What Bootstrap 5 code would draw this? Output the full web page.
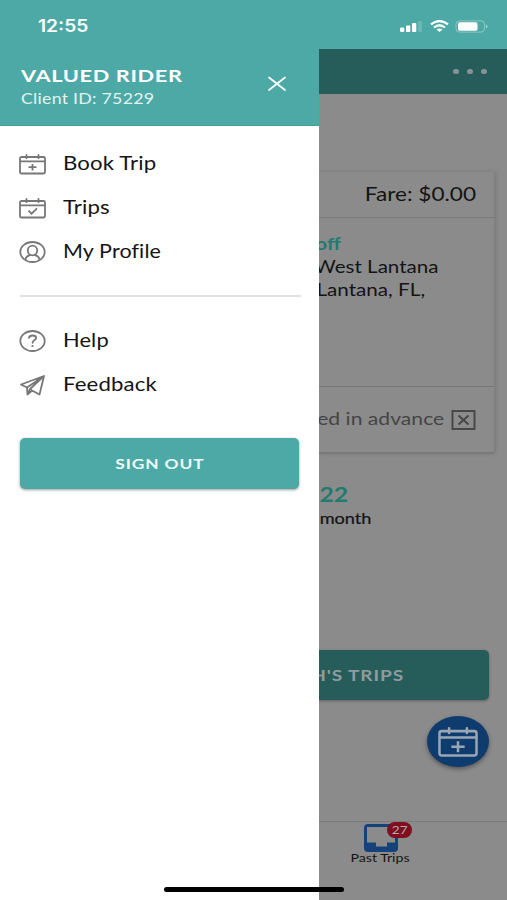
<!DOCTYPE html>
<html lang="en">
<head>
<meta charset="utf-8">
<meta name="viewport" content="width=device-width, initial-scale=1">
<title>Rider menu</title>
<link href="https://cdn.jsdelivr.net/npm/bootstrap@5.3.0/dist/css/bootstrap.min.css" rel="stylesheet">
<style>
:root{--teal:#4ca9a5;--teal-dim:#265d5b;--dim:#8b8b8b;--line-dim:#7b7b7b}
body{font-family:Lato,"Open Sans",sans-serif;color:#141414;background:#fff}
.screen{width:507px;height:900px}
.statusbar{height:49px;background:var(--teal);padding:3px 20px 0 38px}
.clock{font:600 17px/1 Inter,sans-serif;--sx:1.13}
/* wide lettering: glyphs are stretched horizontally from one edge */
.wide{display:inline-block;white-space:nowrap;line-height:1;transform:scaleX(var(--sx,1.19));transform-origin:0 50%}
.wide-end{transform-origin:100% 50%}
.wide-mid{transform-origin:50% 50%}
svg{display:block;flex:none}
.drawer{width:319px}
.drawer-head{height:77px;background:var(--teal);color:#fff;padding:18px 32px 0 21px;border-bottom:1px solid #43a09b}
.close-x{margin-top:8px}
.rider{font-size:17.5px;font-weight:700;letter-spacing:.5px;--sx:1.245}
.client{font-size:14.5px;letter-spacing:.2px;color:#e3f3f2;margin-top:7px;--sx:1.225}
.menu-row{height:44px;padding-left:19px;gap:17px;font-size:18.3px;letter-spacing:.1px}
.menu-row .wide{margin-top:-1px}
.menu-row svg{color:#777;stroke:#777;stroke-width:1.8}
.w-book{--sx:1.215}.w-trips{--sx:1.215}.w-profile{--sx:1.175}.w-help{--sx:1.195}.w-feed{--sx:1.215}
.menu-top{padding-top:16px}
.rule{height:2px;background:#dfe1e1;margin:21px 18px 0 20px}
.menu-bottom{padding-top:22px}
.btn-teal{height:51px;border:0;border-radius:5px;font-size:14px;font-weight:700;letter-spacing:.7px;color:#eefafa;background:var(--teal);box-shadow:0 1px 3px #0006}
.signout{margin:31px 20px 0 20px;--sx:1.24}
.shade{background:var(--dim)}
.appbar{height:45px;background:var(--teal-dim);padding-right:20px;gap:8.5px}
.dot{width:5.6px;height:5.6px;border-radius:50%;background:#8a9196}
.trip{height:282px;margin:78px 12px 0 0;border-right:1px solid #808080;border-bottom:2px solid #7a7a7a;border-bottom-right-radius:4px;box-shadow:1px 0 4px #0002}
.trip-fare{height:46px;padding-right:18px;border-bottom:1px solid var(--line-dim)}
.fs-menu{font-size:18.3px;--sx:1.235}
.trip-body{height:169px;padding-top:14px;border-bottom:1px solid #777}
.trip-body .wide{font-size:17.5px}
.leg{height:23px}
.leg-off{padding-right:153px;color:#237a6f;font-weight:700;--sx:1.16}
.leg-a{padding-right:56px;--sx:1.175}
.leg-b{padding-right:69px;--sx:1.18}
.advance{padding-right:18px;gap:7px;color:#454545;font-size:16.5px;--sx:1.28}
.count{padding:30px 159px 0 0;color:#237a6f;font-size:20px;font-weight:700;--sx:1.24}
.month{padding:8px 136px 0 0;font-size:14.5px;--sx:1.25}
.month .wide{-webkit-text-stroke:.2px}
.alltrips{height:50px;margin:123px 18px 0 0;background:var(--teal-dim);color:#8e9c9f;border-radius:0 5px 5px 0;padding:1px 85px 0 0;--sx:1.27;box-shadow:0 1px 3px #0005}
.alltrips .wide{font-size:15px}
.fab{width:62px;height:51px;border-radius:50%;background:#0f3c6e;margin:16px 18px 0 0;box-shadow:0 2px 4px #0006}
.tabs{margin-top:54px;height:79px;border-top:1px solid #7b7b7b;padding-left:32px}
.tab{width:59px;padding-top:2px}
.tab-label{font-size:11.5px;--sx:1.23}
.count-badge{position:absolute;left:36px;top:0;width:25px;height:16px;border-radius:8px;background:#7d0f1e;color:#b9a9ab;font-size:11.5px;--sx:1.18}
.home{position:absolute;left:164px;bottom:8px;width:180px;height:5px;border-radius:3px;background:#000}
</style>
</head>
<body>
<svg class="d-none">
  <symbol id="cal" viewBox="0 0 27 22">
    <path d="M2.500 4h22q1.500 0 1.500 1.400v13.600q0 1.500-1.500 1.500h-22Q1 20.500 1 19V5.400Q1 4 2.500 4zM1 8.300h25M7.500 2v3.200M19.500 2v3.200" fill="none" stroke-linecap="round"/>
  </symbol>
</svg>
<div class="screen position-relative overflow-hidden d-flex flex-column">
  <header class="statusbar d-flex justify-content-between align-items-center">
    <span class="wide clock text-white">12:55</span>
    <div class="d-flex align-items-center gap-2">
      <svg width="22" height="12" fill="#fff"><rect x="0" y="7.500" width="4.300" height="4.500" rx="1.200"/><rect x="6" y="5.500" width="4.300" height="6.500" rx="1"/><rect x="12" y="3" width="4.300" height="9" rx="1"/><rect x="18" y="1" width="4" height="11" rx="1" opacity=".18"/></svg>
      <svg width="19" height="12" viewBox="0 0 19 12" fill="none" stroke="#fff" stroke-width="2.200"><path d="M1 4.300Q9.500-2.300 18 4.300M4 7.500Q9.500 3 15 7.500"/><path d="M6.500 9.600Q9.500 7.400 12.500 9.600L9.500 12z" fill="#fff" stroke="none"/></svg>
      <svg width="30" height="13" fill="none" class="overflow-visible"><rect x="-1" y=".9" width="28.500" height="11.200" rx="3.500" stroke="#fff" stroke-opacity=".35"/><rect x="1" y="2.300" width="19.500" height="8.400" rx="1.800" fill="#fff"/><path d="M29 4.500q3 2 0 4z" fill="#fff" fill-opacity=".5"/></svg>
    </div>
  </header>
  <div class="d-flex flex-fill">
    <aside class="drawer bg-white flex-shrink-0">
      <div class="drawer-head d-flex justify-content-between">
        <div class="d-flex flex-column align-items-start">
          <span class="wide rider">VALUED RIDER</span>
          <span class="wide client">Client ID: 75229</span>
        </div>
        <svg class="close-x" width="20" height="17" stroke="#fff" stroke-width="1.700" stroke-linecap="round"><path d="M2 2.500 18 15M18 2.500 2 15"/></svg>
      </div>
      <nav class="menu-top">
        <div class="menu-row d-flex align-items-center">
          <svg width="27" height="22"><use href="#cal"/><path d="M13.500 11v6.500M9.500 14.200h8"/></svg>
          <span class="wide w-book">Book Trip</span>
        </div>
        <div class="menu-row d-flex align-items-center">
          <svg width="27" height="22"><use href="#cal"/><path d="m9.500 13.700 3 3 5.500-5.300" fill="none"/></svg>
          <span class="wide w-trips">Trips</span>
        </div>
        <div class="menu-row d-flex align-items-center">
          <svg width="27" height="22" viewBox="0 0 27 22" fill="none"><ellipse cx="13.500" cy="11" rx="12.200" ry="10"/><ellipse cx="13.500" cy="9.500" rx="4.700" ry="4.800"/><path d="M6.500 18.500q.5-3.500 5.200-4.700M20.500 18.500q-.5-3.500-5.200-4.700"/></svg>
          <span class="wide w-profile">My Profile</span>
        </div>
      </nav>
      <div class="rule"></div>
      <nav class="menu-bottom">
        <div class="menu-row d-flex align-items-center">
          <svg width="27" height="22" viewBox="0 0 27 22" fill="none"><ellipse cx="13.500" cy="11" rx="12.200" ry="10"/><path d="M10 7.800q.3-2.300 3.700-2.300 3.400 0 3.400 2.500 0 1.300-1.800 2.300-1.700 1-1.700 2.500" stroke-linecap="round"/><ellipse cx="13.500" cy="16" rx="1.200" ry="1" fill="#777" stroke="none"/></svg>
          <span class="wide w-help">Help</span>
        </div>
        <div class="menu-row d-flex align-items-center">
          <svg width="27" height="22" viewBox="0 0 27 22" fill="none" stroke-linejoin="round"><path d="M2 10.500 25 2 20.500 20.500 13 16.500 8.500 20.500 8 13.500zM8 13.500 25 2 11 15 8.500 20.500M11 15l2 1.500"/></svg>
          <span class="wide w-feed">Feedback</span>
        </div>
      </nav>
      <div class="btn-teal signout d-flex align-items-center justify-content-center"><span class="wide wide-mid">SIGN OUT</span></div>
    </aside>
    <main class="shade flex-fill overflow-hidden d-flex flex-column">
      <div class="appbar d-flex align-items-center justify-content-end flex-shrink-0"><i class="dot"></i><i class="dot"></i><i class="dot"></i></div>
      <section class="trip flex-shrink-0 d-flex flex-column">
        <div class="trip-fare d-flex align-items-center justify-content-end"><span class="wide wide-end fs-menu">Fare: $0.00</span></div>
        <div class="trip-body">
          <div class="leg leg-off d-flex align-items-center justify-content-end"><span class="wide wide-end">off</span></div>
          <div class="leg leg-a d-flex align-items-center justify-content-end"><span class="wide wide-end">West Lantana</span></div>
          <div class="leg leg-b d-flex align-items-center justify-content-end"><span class="wide wide-end">Lantana, FL,</span></div>
        </div>
        <div class="advance flex-fill d-flex align-items-center justify-content-end">
          <span class="wide wide-end">ed in advance</span>
          <svg width="25" height="20" fill="none" stroke="#454545" stroke-width="1.900"><rect x="1.500" y="1" width="22" height="18"/><path d="m7.500 5.500 10 9M17.500 5.500l-10 9"/></svg>
        </div>
      </section>
      <div class="count d-flex justify-content-end"><span class="wide wide-end">22</span></div>
      <div class="month d-flex justify-content-end"><span class="wide wide-end">month</span></div>
      <div class="btn-teal alltrips flex-shrink-0 d-flex align-items-center justify-content-end"><span class="wide wide-end">H'S TRIPS</span></div>
      <div class="fab flex-shrink-0 align-self-end d-flex align-items-center justify-content-center">
        <svg width="40" height="33" viewBox="0 0 27 22" stroke="#9aa6b4" stroke-width="1.700"><use href="#cal" width="27" height="22"/><path d="M13.500 10.800v7.400M9 14.500h9"/></svg>
      </div>
      <div class="tabs flex-shrink-0">
        <div class="tab position-relative d-flex flex-column align-items-center">
          <svg width="34" height="28" viewBox="0 0 34 28"><rect width="34" height="28" rx="4" fill="#154379"/><path d="M3 3h28v15.500h-8v4H12v-4H3z" fill="#8b8b8b"/></svg>
          <span class="count-badge d-flex align-items-center justify-content-center"><span class="wide wide-mid">27</span></span>
          <span class="wide wide-mid tab-label">Past Trips</span>
        </div>
      </div>
    </main>
  </div>
  <div class="home"></div>
</div>
<script src="https://cdn.jsdelivr.net/npm/bootstrap@5.3.0/dist/js/bootstrap.bundle.min.js"></script>
</body>
</html>
